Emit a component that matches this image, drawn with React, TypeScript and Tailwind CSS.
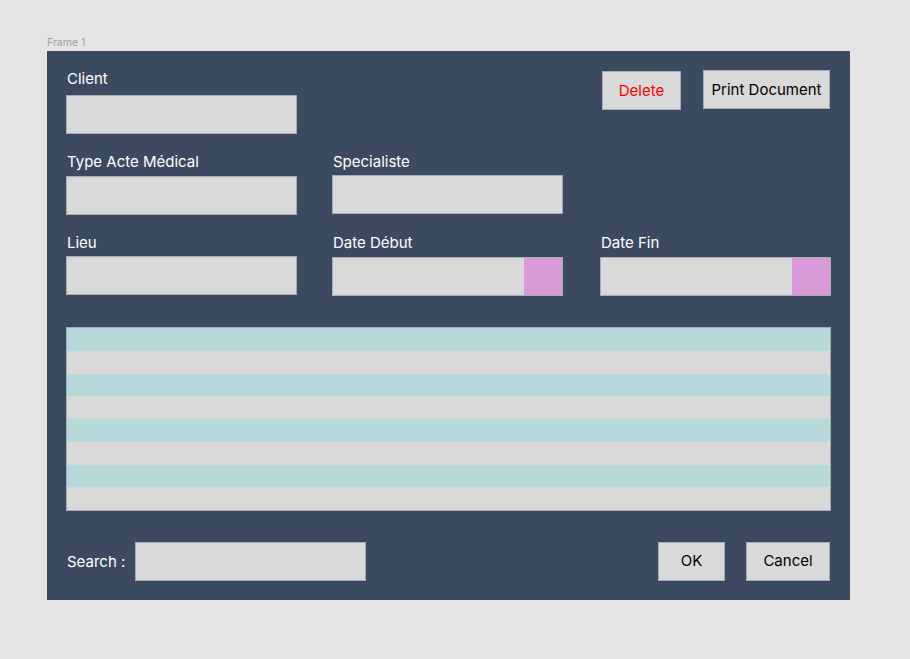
import React from "react";

const inputCls = "bg-[#d9d9d9] border border-[#a3abb5] h-[39px] w-[231px]";
const labelCls = "text-white text-[15px] leading-[20px] h-[20px] pl-[1px] pt-[1px]";

function DateInput() {
  return (
    <div className="flex h-[39px] w-[231px] border border-[#a3abb5] bg-[#d9d9d9]">
      <div className="flex-1" />
      <div className="w-[38px] bg-[#d99ad9]" />
    </div>
  );
}

export default function App() {
  const rows = Array.from({ length: 8 }, (_, i) => i);
  return (
    <div
      className="w-[910px] h-[659px] bg-[#e5e5e5] pt-[36px] pl-[47px]"
      style={{ fontFamily: "Inter, 'Liberation Sans', sans-serif" }}
    >
      <div className="text-[10.5px] leading-[14px] text-[#a0a0a0] h-[15px]">Frame 1</div>
      <div className="w-[803px] h-[549px] bg-[#3c4a5f] pl-[19px] pr-[20px] pt-[17px] flex flex-col">
        {/* Row 1 */}
        <div className="flex items-start h-[65px]">
          <div className="flex flex-col gap-[7px]">
            <div className={labelCls}>Client</div>
            <div className={inputCls} />
          </div>
          <div className="flex-1" />
          <div className="flex items-start gap-[22px] mt-[2px]">
            <button className="w-[79px] h-[39px] bg-[#d9d9d9] border border-[#a3abb5] text-[#ff0000] text-[15px] mt-[1px] pt-[2px]">
              Delete
            </button>
            <button className="w-[127px] h-[39px] bg-[#d9d9d9] border border-[#a3abb5] text-black text-[15px] pt-[2px]">
              Print Document
            </button>
          </div>
        </div>
        {/* Row 2 */}
        <div className="flex items-start gap-[35px] mt-[18px] h-[63px]">
          <div className="flex flex-col gap-[5px]">
            <div className={labelCls}>Type Acte Médical</div>
            <div className={inputCls} />
          </div>
          <div className="flex flex-col gap-[4px]">
            <div className={labelCls}>Specialiste</div>
            <div className={inputCls} />
          </div>
        </div>
        {/* Row 3 */}
        <div className="flex items-start mt-[18px] h-[64px]">
          <div className="flex flex-col gap-[4px]">
            <div className={labelCls}>Lieu</div>
            <div className={inputCls} />
          </div>
          <div className="flex flex-col gap-[5px] ml-[35px]">
            <div className={labelCls}>Date Début</div>
            <DateInput />
          </div>
          <div className="flex flex-col gap-[5px] ml-[37px]">
            <div className={labelCls}>Date Fin</div>
            <DateInput />
          </div>
        </div>
        {/* Table */}
        <div className="mt-[31px] w-[765px] h-[184px] border border-[#a3abb5] flex flex-col">
          {rows.map((i) => (
            <div key={i} className={i % 2 === 0 ? "flex-1 bg-[#b8d9d9]" : "flex-1 bg-[#d9d9d9]"} />
          ))}
        </div>
        {/* Bottom */}
        <div className="flex items-center mt-[30px] h-[40px]">
          <div className="text-white text-[15px] leading-[20px] w-[69px] pl-[1px] pt-[1px]">Search :</div>
          <div className="bg-[#d9d9d9] border border-[#a3abb5] h-[39px] w-[231px]" />
          <div className="flex-1" />
          <button className="w-[67px] h-[39px] bg-[#d9d9d9] border border-[#a3abb5] text-black text-[15px]">
            OK
          </button>
          <button className="ml-[21px] w-[84px] h-[39px] bg-[#d9d9d9] border border-[#a3abb5] text-black text-[15px]">
            Cancel
          </button>
        </div>
      </div>
    </div>
  );
}
